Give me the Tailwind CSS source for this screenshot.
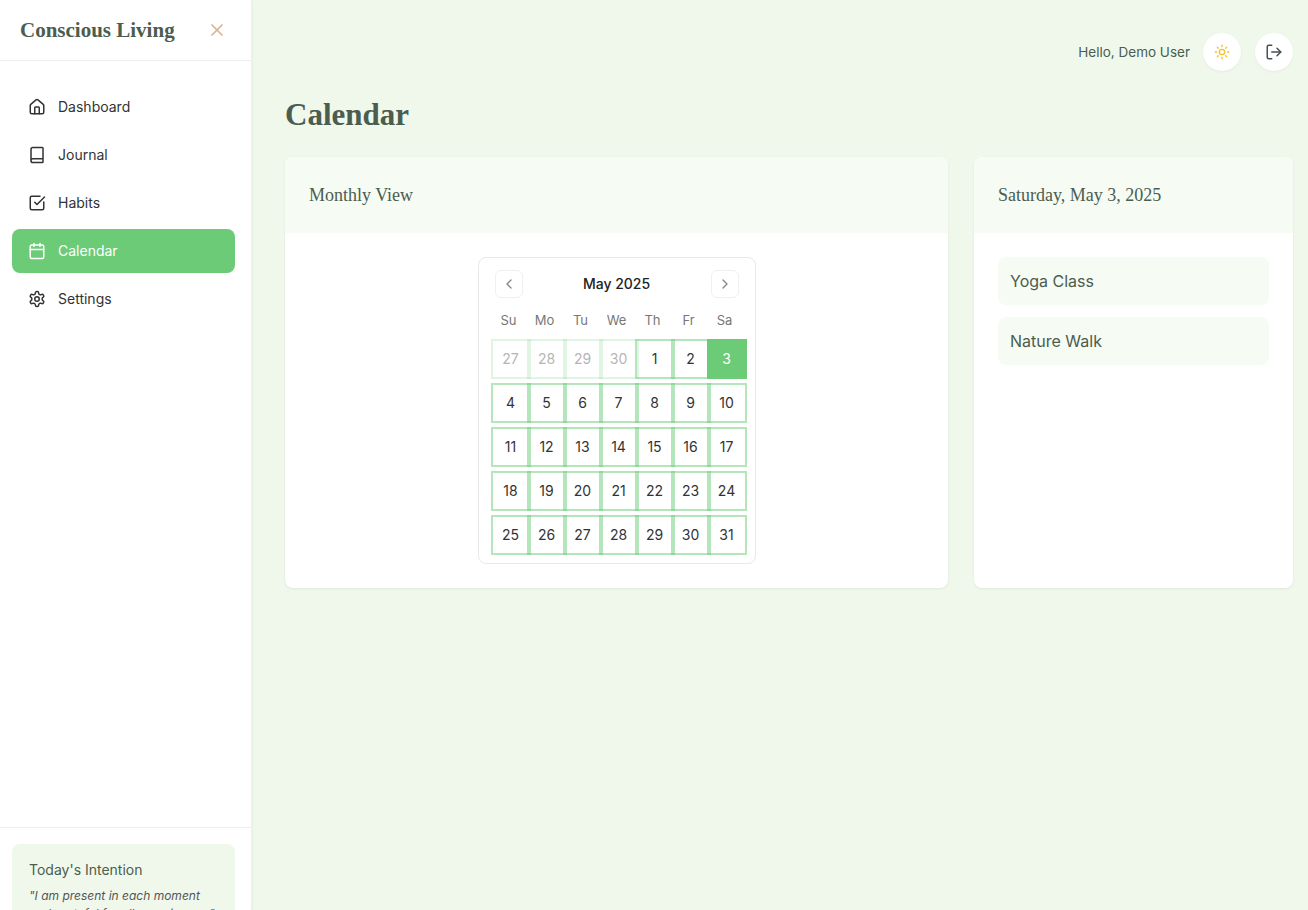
<!DOCTYPE html>
<html lang="en">
<head>
  <meta charset="UTF-8" />
  <title>Calendar - Conscious Living</title>
  <script src="https://cdn.jsdelivr.net/npm/@tailwindcss/browser@4"></script>
</head>
<body class="h-[910px] overflow-hidden bg-[#f0f8ec] font-['Inter',sans-serif] text-[#333]">
<div class="flex h-[910px]">

  <!-- sidebar -->
  <aside class="flex h-[910px] w-[252px] shrink-0 flex-col overflow-hidden border-r border-[#ecf4e9] bg-white shadow-[0_1px_3px_rgba(0,0,0,0.06)]">
    <div class="flex h-[61px] shrink-0 items-center justify-between border-b border-[#eeeeee] pl-5 pr-6">
      <span class="mt-[2px] font-['Liberation_Serif',serif] text-[21px] font-bold text-[#4a5d4f]">Conscious Living</span>
      <svg class="h-5 w-5 text-[#d9b48f]" viewBox="0 0 24 24" fill="none" stroke="currentColor" stroke-width="2" stroke-linecap="round" stroke-linejoin="round"><path d="M18 6 6 18"/><path d="m6 6 12 12"/></svg>
    </div>

    <nav class="flex flex-1 flex-col gap-1 pl-3 pr-4 pt-6">
      <a class="flex h-11 items-center gap-3 rounded-lg px-4 text-sm text-[#333]">
        <svg class="h-[18px] w-[18px]" viewBox="0 0 24 24" fill="none" stroke="currentColor" stroke-width="2" stroke-linecap="round" stroke-linejoin="round"><path d="M15 21v-8a1 1 0 0 0-1-1h-4a1 1 0 0 0-1 1v8"/><path d="M3 10a2 2 0 0 1 .709-1.528l7-5.999a2 2 0 0 1 2.582 0l7 5.999A2 2 0 0 1 21 10v9a2 2 0 0 1-2 2H5a2 2 0 0 1-2-2z"/></svg>
        Dashboard
      </a>
      <a class="flex h-11 items-center gap-3 rounded-lg px-4 text-sm text-[#333]">
        <svg class="h-[18px] w-[18px]" viewBox="0 0 24 24" fill="none" stroke="currentColor" stroke-width="2" stroke-linecap="round" stroke-linejoin="round"><path d="M4 19.5v-15A2.5 2.5 0 0 1 6.5 2H19a1 1 0 0 1 1 1v18a1 1 0 0 1-1 1H6.5a1 1 0 0 1 0-5H20"/></svg>
        Journal
      </a>
      <a class="flex h-11 items-center gap-3 rounded-lg px-4 text-sm text-[#333]">
        <svg class="h-[18px] w-[18px]" viewBox="0 0 24 24" fill="none" stroke="currentColor" stroke-width="2" stroke-linecap="round" stroke-linejoin="round"><path d="M21 10.5V19a2 2 0 0 1-2 2H5a2 2 0 0 1-2-2V5a2 2 0 0 1 2-2h11"/><path d="m9 11 3 3L22 4"/></svg>
        Habits
      </a>
      <a class="flex h-11 items-center gap-3 rounded-lg bg-[#6bcb77] px-4 text-sm text-white">
        <svg class="h-[18px] w-[18px]" viewBox="0 0 24 24" fill="none" stroke="currentColor" stroke-width="2" stroke-linecap="round" stroke-linejoin="round"><path d="M8 2v4"/><path d="M16 2v4"/><rect width="18" height="18" x="3" y="4" rx="2"/><path d="M3 10h18"/></svg>
        Calendar
      </a>
      <a class="flex h-11 items-center gap-3 rounded-lg px-4 text-sm text-[#333]">
        <svg class="h-[18px] w-[18px]" viewBox="0 0 24 24" fill="none" stroke="currentColor" stroke-width="2" stroke-linecap="round" stroke-linejoin="round"><path d="M12.22 2h-.44a2 2 0 0 0-2 2v.18a2 2 0 0 1-1 1.73l-.43.25a2 2 0 0 1-2 0l-.15-.08a2 2 0 0 0-2.73.73l-.22.38a2 2 0 0 0 .73 2.73l.15.1a2 2 0 0 1 1 1.72v.51a2 2 0 0 1-1 1.74l-.15.09a2 2 0 0 0-.73 2.73l.22.38a2 2 0 0 0 2.73.73l.15-.08a2 2 0 0 1 2 0l.43.25a2 2 0 0 1 1 1.73V20a2 2 0 0 0 2 2h.44a2 2 0 0 0 2-2v-.18a2 2 0 0 1 1-1.73l.43-.25a2 2 0 0 1 2 0l.15.08a2 2 0 0 0 2.73-.73l.22-.39a2 2 0 0 0-.73-2.73l-.15-.08a2 2 0 0 1-1-1.74v-.5a2 2 0 0 1 1-1.74l.15-.09a2 2 0 0 0 .73-2.73l-.22-.38a2 2 0 0 0-2.73-.73l-.15.08a2 2 0 0 1-2 0l-.43-.25a2 2 0 0 1-1-1.73V4a2 2 0 0 0-2-2z"/><circle cx="12" cy="12" r="3"/></svg>
        Settings
      </a>
    </nav>

    <div class="h-[83px] shrink-0 border-t border-[#eeeeee] pl-3 pr-4 pt-4">
      <div class="h-[100px] rounded-lg bg-[#f0f8ec] pl-[17px] pr-3 pt-4">
        <p class="text-sm leading-5 text-[#4a5d4f]">Today's Intention</p>
        <p class="mt-[7px] text-xs leading-[18px] italic text-[#555]">"I am present in each moment and grateful for all experiences."</p>
      </div>
    </div>
  </aside>

  <!-- main -->
  <main class="min-w-0 flex-1 pl-[33px] pr-[15px] pt-8">
    <div class="flex h-10 items-center justify-end">
      <span class="mr-[13px] text-[13.5px] text-[#4a5d4f]">Hello, Demo User</span>
      <button class="flex h-[38px] w-[38px] items-center justify-center rounded-full bg-white shadow-[0_1px_3px_rgba(0,0,0,0.05)]">
        <svg class="h-4 w-4 text-[#f2c230]" viewBox="0 0 24 24" fill="none" stroke="currentColor" stroke-width="2" stroke-linecap="round" stroke-linejoin="round"><circle cx="12" cy="12" r="4"/><path d="M12 2v2"/><path d="M12 20v2"/><path d="m4.93 4.93 1.41 1.41"/><path d="m17.66 17.66 1.41 1.41"/><path d="M2 12h2"/><path d="M20 12h2"/><path d="m6.34 17.66-1.41 1.41"/><path d="m19.07 4.93-1.41 1.41"/></svg>
      </button>
      <button class="ml-[14px] flex h-[38px] w-[38px] items-center justify-center rounded-full bg-white shadow-[0_1px_3px_rgba(0,0,0,0.05)]">
        <svg class="h-[18px] w-[18px] text-[#4a4f55]" viewBox="0 0 24 24" fill="none" stroke="currentColor" stroke-width="2" stroke-linecap="round" stroke-linejoin="round"><path d="M9 21H5a2 2 0 0 1-2-2V5a2 2 0 0 1 2-2h4"/><path d="m16 17 5-5-5-5"/><path d="M21 12H9"/></svg>
      </button>
    </div>

    <h1 class="mt-[23px] font-['Liberation_Serif',serif] text-[31px] leading-10 font-bold text-[#4a5d4f]">Calendar</h1>

    <div class="mt-[22px] flex items-stretch gap-[26px]">
      <section class="w-[663px] overflow-hidden rounded-lg bg-white shadow-[0_1px_3px_rgba(0,0,0,0.07)]">
        <div class="flex h-[76px] items-center bg-[#f6fbf4] px-6 font-['Liberation_Serif',serif] text-lg text-[#4a5d4f]">Monthly View</div>
        <div class="flex justify-center p-6">
          <div class="w-[278px] rounded-lg border border-[#e8e8e8] bg-white px-3 pt-3 pb-2">
            <div class="flex h-7 items-center justify-between px-1">
              <button class="flex h-7 w-7 items-center justify-center rounded-md border border-[#f0f0f0] text-[#888]">
                <svg class="h-4 w-4" viewBox="0 0 24 24" fill="none" stroke="currentColor" stroke-width="2" stroke-linecap="round" stroke-linejoin="round"><path d="m15 18-6-6 6-6"/></svg>
              </button>
              <span class="text-sm font-medium text-[#222]">May 2025</span>
              <button class="flex h-7 w-7 items-center justify-center rounded-md border border-[#f0f0f0] text-[#888]">
                <svg class="h-4 w-4" viewBox="0 0 24 24" fill="none" stroke="currentColor" stroke-width="2" stroke-linecap="round" stroke-linejoin="round"><path d="m9 18 6-6-6-6"/></svg>
              </button>
            </div>

            <div class="mt-[14px] flex h-[18px] items-center text-[13px] text-[#777]">
              <span class="w-9 text-center">Su</span><span class="w-9 text-center">Mo</span><span class="w-9 text-center">Tu</span><span class="w-9 text-center">We</span><span class="w-9 text-center">Th</span><span class="w-9 text-center">Fr</span><span class="w-9 text-center">Sa</span>
            </div>

            <div class="mt-[9px] flex w-[256px] flex-col gap-1 text-sm text-[#333]">
              <div class="flex -space-x-1">
                <span class="flex h-10 w-10 shrink-0 items-center justify-center border-2 border-[#6bcb77]/20 text-[#b5b5b5]">27</span>
                <span class="flex h-10 w-10 shrink-0 items-center justify-center border-2 border-[#6bcb77]/20 text-[#b5b5b5]">28</span>
                <span class="flex h-10 w-10 shrink-0 items-center justify-center border-2 border-[#6bcb77]/20 text-[#b5b5b5]">29</span>
                <span class="flex h-10 w-10 shrink-0 items-center justify-center border-2 border-[#6bcb77]/20 text-[#b5b5b5]">30</span>
                <span class="flex h-10 w-10 shrink-0 items-center justify-center border-2 border-[#6bcb77]/50">1</span>
                <span class="flex h-10 w-10 shrink-0 items-center justify-center border-2 border-[#6bcb77]/50">2</span>
                <span class="flex h-10 w-10 shrink-0 items-center justify-center bg-[#6bcb77] text-white">3</span>
              </div>
              <div class="flex -space-x-1">
                <span class="flex h-10 w-10 shrink-0 items-center justify-center border-2 border-[#6bcb77]/50">4</span>
                <span class="flex h-10 w-10 shrink-0 items-center justify-center border-2 border-[#6bcb77]/50">5</span>
                <span class="flex h-10 w-10 shrink-0 items-center justify-center border-2 border-[#6bcb77]/50">6</span>
                <span class="flex h-10 w-10 shrink-0 items-center justify-center border-2 border-[#6bcb77]/50">7</span>
                <span class="flex h-10 w-10 shrink-0 items-center justify-center border-2 border-[#6bcb77]/50">8</span>
                <span class="flex h-10 w-10 shrink-0 items-center justify-center border-2 border-[#6bcb77]/50">9</span>
                <span class="flex h-10 w-10 shrink-0 items-center justify-center border-2 border-[#6bcb77]/50">10</span>
              </div>
              <div class="flex -space-x-1">
                <span class="flex h-10 w-10 shrink-0 items-center justify-center border-2 border-[#6bcb77]/50">11</span>
                <span class="flex h-10 w-10 shrink-0 items-center justify-center border-2 border-[#6bcb77]/50">12</span>
                <span class="flex h-10 w-10 shrink-0 items-center justify-center border-2 border-[#6bcb77]/50">13</span>
                <span class="flex h-10 w-10 shrink-0 items-center justify-center border-2 border-[#6bcb77]/50">14</span>
                <span class="flex h-10 w-10 shrink-0 items-center justify-center border-2 border-[#6bcb77]/50">15</span>
                <span class="flex h-10 w-10 shrink-0 items-center justify-center border-2 border-[#6bcb77]/50">16</span>
                <span class="flex h-10 w-10 shrink-0 items-center justify-center border-2 border-[#6bcb77]/50">17</span>
              </div>
              <div class="flex -space-x-1">
                <span class="flex h-10 w-10 shrink-0 items-center justify-center border-2 border-[#6bcb77]/50">18</span>
                <span class="flex h-10 w-10 shrink-0 items-center justify-center border-2 border-[#6bcb77]/50">19</span>
                <span class="flex h-10 w-10 shrink-0 items-center justify-center border-2 border-[#6bcb77]/50">20</span>
                <span class="flex h-10 w-10 shrink-0 items-center justify-center border-2 border-[#6bcb77]/50">21</span>
                <span class="flex h-10 w-10 shrink-0 items-center justify-center border-2 border-[#6bcb77]/50">22</span>
                <span class="flex h-10 w-10 shrink-0 items-center justify-center border-2 border-[#6bcb77]/50">23</span>
                <span class="flex h-10 w-10 shrink-0 items-center justify-center border-2 border-[#6bcb77]/50">24</span>
              </div>
              <div class="flex -space-x-1">
                <span class="flex h-10 w-10 shrink-0 items-center justify-center border-2 border-[#6bcb77]/50">25</span>
                <span class="flex h-10 w-10 shrink-0 items-center justify-center border-2 border-[#6bcb77]/50">26</span>
                <span class="flex h-10 w-10 shrink-0 items-center justify-center border-2 border-[#6bcb77]/50">27</span>
                <span class="flex h-10 w-10 shrink-0 items-center justify-center border-2 border-[#6bcb77]/50">28</span>
                <span class="flex h-10 w-10 shrink-0 items-center justify-center border-2 border-[#6bcb77]/50">29</span>
                <span class="flex h-10 w-10 shrink-0 items-center justify-center border-2 border-[#6bcb77]/50">30</span>
                <span class="flex h-10 w-10 shrink-0 items-center justify-center border-2 border-[#6bcb77]/50">31</span>
              </div>
            </div>
          </div>
        </div>
      </section>

      <section class="w-[319px] overflow-hidden rounded-lg bg-white shadow-[0_1px_3px_rgba(0,0,0,0.07)]">
        <div class="flex h-[76px] items-center bg-[#f6fbf4] px-6 font-['Liberation_Serif',serif] text-lg text-[#4a5d4f]">Saturday, May 3, 2025</div>
        <div class="flex flex-col gap-3 p-6">
          <div class="flex h-12 items-center rounded-lg bg-[#f6fbf4] px-3 text-base text-[#4a5d4f]">Yoga Class</div>
          <div class="flex h-12 items-center rounded-lg bg-[#f6fbf4] px-3 text-base text-[#4a5d4f]">Nature Walk</div>
        </div>
      </section>
    </div>
  </main>
</div>
</body>
</html>
